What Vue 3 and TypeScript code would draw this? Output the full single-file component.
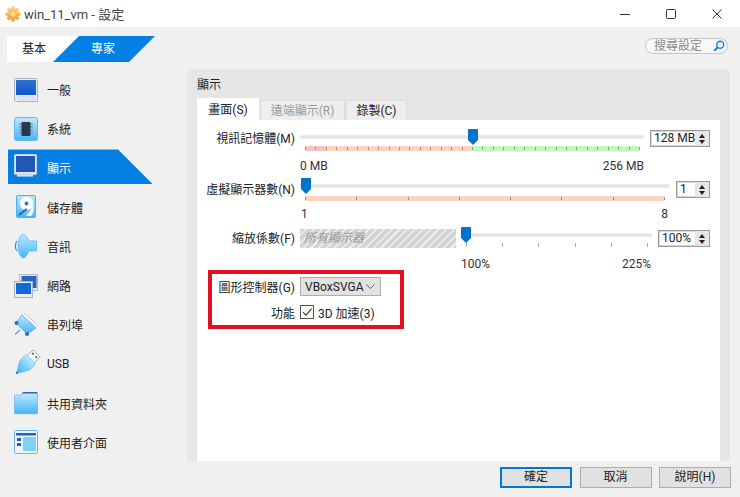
<script setup lang="ts">
interface NavItem { key: string; label: string }
const navItems: NavItem[] = [
  { key: 'general', label: '一般' },
  { key: 'system', label: '系統' },
  { key: 'display', label: '顯示' },
  { key: 'storage', label: '儲存體' },
  { key: 'audio', label: '音訊' },
  { key: 'network', label: '網路' },
  { key: 'serial', label: '串列埠' },
  { key: 'usb', label: 'USB' },
  { key: 'folder', label: '共用資料夾' },
  { key: 'ui', label: '使用者介面' },
]
const ticks = (n: number): string[] =>
  Array.from({ length: n + 1 }, (_, i) => `${(i / n) * 100}%`)
const memTicks = ticks(32)
const monTicks = ticks(7)
const scaleTicks = ticks(5)
</script>

<template>
  <div class="window">
    <svg class="defs" width="0" height="0" aria-hidden="true">
      <defs>
        <linearGradient id="lb" x1="0" y1="0" x2="0" y2="1">
          <stop offset="0" stop-color="#bfe9ff" />
          <stop offset="1" stop-color="#45b5f6" />
        </linearGradient>
        <linearGradient id="db" x1="0" y1="0" x2="0" y2="1">
          <stop offset="0" stop-color="#2f6fd0" />
          <stop offset="1" stop-color="#0f59c8" />
        </linearGradient>
        <linearGradient id="gear" x1="0" y1="0" x2="0" y2="1">
          <stop offset="0" stop-color="#ffcf7a" />
          <stop offset="1" stop-color="#f2a238" />
        </linearGradient>
      </defs>
    </svg>

    <header class="titlebar">
      <svg class="app-icon" viewBox="0 0 16 16">
        <g fill="url(#gear)">
          <circle cx="8" cy="8" r="6" />
          <rect x="6.4" y="0.3" width="3.2" height="15.4" rx="1.2" />
          <rect x="0.3" y="6.4" width="15.4" height="3.2" rx="1.2" />
          <rect x="6.4" y="0.3" width="3.2" height="15.4" rx="1.2" transform="rotate(45 8 8)" />
          <rect x="6.4" y="0.3" width="3.2" height="15.4" rx="1.2" transform="rotate(-45 8 8)" />
        </g>
        <circle cx="8" cy="8" r="3" fill="#ffdc90" stroke="#eda53c" stroke-width=".6" />
      </svg>
      <span class="title">win_11_vm - 設定</span>
      <div class="win-controls">
        <svg width="10" height="10" viewBox="0 0 10 10"><path d="M0 5.5h10" stroke="#333" fill="none" /></svg>
        <svg width="10" height="10" viewBox="0 0 10 10"><rect x=".5" y=".5" width="9" height="9" rx="1" stroke="#333" fill="none" /></svg>
        <svg width="10" height="10" viewBox="0 0 10 10"><path d="M.5.5l9 9M9.5.5l-9 9" stroke="#333" fill="none" /></svg>
      </div>
    </header>

    <div class="main">
      <aside class="sidebar">
        <div class="mode-tabs">
          <svg class="mode-bg" width="148" height="26" viewBox="0 0 148 26">
            <polygon points="0,0 72,0 46,26 0,26" fill="#fff" />
            <polygon points="72,0 148,0 122,26 46,26" fill="#0480e4" />
          </svg>
          <span class="mode basic">基本</span>
          <span class="mode expert">專家</span>
        </div>
        <nav class="nav">
          <div v-for="item in navItems" :key="item.key" class="nav-item" :class="{ active: item.key === 'display' }">
            <svg class="nav-icon" viewBox="0 0 24 24">
              <template v-if="item.key === 'general'">
                <rect x=".5" y=".5" width="23" height="23" rx="1" fill="#e9edf2" stroke="#a9b4c0" />
                <rect x="2" y="2" width="20" height="15" fill="url(#db)" />
                <path d="M4 21v-2h16v2z" fill="#fff" stroke="#aab3bd" stroke-width=".6" />
              </template>
              <template v-else-if="item.key === 'system'">
                <rect x=".5" y=".5" width="23" height="23" rx="2" fill="url(#lb)" stroke="#63b8ea" />
                <path d="M5 7h3M5 10h3M5 13h3M5 16h3M16 7h3M16 10h3M16 13h3M16 16h3" stroke="#7d97ad" stroke-width="1.4" />
                <rect x="7.5" y="5" width="9" height="14" rx="1" fill="#27384c" />
              </template>
              <template v-else-if="item.key === 'display'">
                <rect x=".5" y=".5" width="22" height="20" rx="1" fill="#dfe8f2" stroke="#c3d3e4" />
                <rect x="2" y="2" width="19" height="16" fill="#2257ba" />
                <path d="M3 21h16v1.6H3z" fill="#d5e3f2" />
              </template>
              <template v-else-if="item.key === 'storage'">
                <rect x="2.500" y=".5" width="19" height="22" rx="1.500" fill="url(#lb)" stroke="#4ab0ec" />
                <circle cx="12.500" cy="8.500" r="6.800" fill="#fff" />
                <path d="M12 21h5c2-2 3-5 2.400-11.500C18 14 15 17.500 12 21z" fill="#fff" />
                <circle cx="12.500" cy="8.500" r="2" fill="#2a7ad2" />
                <path d="M5.500 19.500l6.500-5" stroke="#1f6cc8" stroke-width="2.200" stroke-linecap="round" />
              </template>
              <template v-else-if="item.key === 'audio'">
                <path d="M3 7C.8 9.500.8 14.500 3 17" fill="none" stroke="#2f7fd6" stroke-width="1.100" />
                <path d="M9 0C6 1 4 6 4 12s2 11 5 12c1.500-.2 2.500-1 3.500-2.500L15 17h7.500V7H15l-2.500-4.500C11.500 1 10.500.2 9 0z" fill="url(#lb)" stroke="#55b7ef" stroke-width=".7" />
              </template>
              <template v-else-if="item.key === 'network'">
                <rect x="5.500" y=".5" width="18" height="16" fill="#e4e9ef" stroke="#b2bcc8" />
                <rect x="7.500" y="2" width="15" height="12" fill="#2a62c4" />
                <rect x=".5" y="7.500" width="18" height="16" fill="#e9edf2" stroke="#a9b4c0" />
                <rect x="2" y="9" width="15" height="11" fill="#1766d6" />
              </template>
              <template v-else-if="item.key === 'serial'">
                <path d="M9 1l14 12.500" stroke="#9aa5b1" stroke-width="3.600" fill="none" />
                <path d="M9 1l14 12.500" stroke="#fff" stroke-width="2.400" fill="none" />
                <path d="M2 10L8 2l14 13-9 6z" fill="url(#lb)" stroke="#3fa7e5" stroke-width=".7" />
                <path d="M6 17l-5 4.500" stroke="#3fa7e5" stroke-width="1.200" />
                <circle cx="2.500" cy="10" r="2" fill="#1f6fd0" />
                <circle cx="13" cy="21" r="2" fill="#1f6fd0" />
              </template>
              <template v-else-if="item.key === 'usb'">
                <g transform="rotate(45 12 12)">
                  <rect x="7" y="-3" width="10" height="9" fill="#f7f9fb" stroke="#8e9aa7" stroke-width=".7" />
                  <rect x="8.800" y="-1" width="1.800" height="1.800" fill="#3a4a5a" />
                  <rect x="13.400" y="-1" width="1.800" height="1.800" fill="#3a4a5a" />
                  <path d="M5.500 5h13l.5 7c0 4-4 7-5.500 11h-3C9 19 5 16 5 12z" fill="url(#lb)" stroke="#4ab0ec" stroke-width=".5" />
                  <circle cx="12" cy="24.500" r="1.400" fill="#2f7fd6" />
                </g>
              </template>
              <template v-else-if="item.key === 'folder'">
                <path d="M9 1h13.500a1 1 0 011 1v3H7z" fill="#2a62c4" />
                <path d="M1.500 4H7l2-1.500h14.500V22a.8.8 0 01-.8.8H1.300A.8.8 0 01.5 22V5z" fill="url(#lb)" stroke="#4ab0ec" stroke-width=".6" />
              </template>
              <template v-else>
                <rect x=".5" y=".5" width="23" height="23" rx="1" fill="#eaf5fd" stroke="#6fb6e8" />
                <rect x="2" y="3" width="20" height="2.500" fill="#2560c0" />
                <rect x="9" y="7" width="13" height="14" fill="#7fd0fb" />
                <rect x="3" y="8" width="4" height="3" fill="#2560c0" />
                <rect x="3" y="13" width="4" height="3" fill="#2560c0" />
              </template>
            </svg>
            <span class="nav-label">{{ item.label }}</span>
          </div>
        </nav>
      </aside>

      <section class="content">
        <div class="search-row">
          <div class="search">
            <span>搜尋設定</span>
            <svg width="12" height="12" viewBox="0 0 12 12">
              <circle cx="7.200" cy="4.800" r="3.500" fill="#eaf6ff" stroke="#1f7fd8" stroke-width="1.400" />
              <path d="M4.500 7.500L1.800 10.200" stroke="#1f7fd8" stroke-width="2" stroke-linecap="round" />
            </svg>
          </div>
        </div>

        <div class="panel">
          <h2 class="panel-title">顯示</h2>
          <div class="tabs">
            <span class="tab selected">畫面(S)</span>
            <span class="tab disabled">遠端顯示(R)</span>
            <span class="tab">錄製(C)</span>
          </div>
          <div class="page">
            <div class="row row-mem">
              <label class="label">視訊記憶體(M)</label>
              <div class="slider">
                <div class="track">
                  <svg class="handle handle-mem" width="10" height="16" viewBox="0 0 10 16"><path d="M1 0h8a1 1 0 011 1v10l-5 5-5-5V1a1 1 0 011-1z" /></svg>
                </div>
                <div class="band band-mem">
                  <i v-for="t in memTicks" :key="t" class="tick" :style="{ left: t }" />
                </div>
                <div class="scale-labels labels-mem"><span>0 MB</span><span>256 MB</span></div>
              </div>
              <div class="spin spin-mem">
                <span class="spin-value">128 MB</span>
                <span class="spin-btns"><b class="up" /><b class="down" /></span>
              </div>
            </div>

            <div class="row row-mon">
              <label class="label">虛擬顯示器數(N)</label>
              <div class="slider">
                <div class="track">
                  <svg class="handle handle-mon" width="10" height="16" viewBox="0 0 10 16"><path d="M1 0h8a1 1 0 011 1v10l-5 5-5-5V1a1 1 0 011-1z" /></svg>
                </div>
                <div class="band band-mon">
                  <i v-for="t in monTicks" :key="t" class="tick" :style="{ left: t }" />
                </div>
                <div class="scale-labels labels-mon"><span>1</span><span>8</span></div>
              </div>
              <div class="spin spin-mon">
                <span class="spin-value">1</span>
                <span class="spin-btns"><b class="up" /><b class="down" /></span>
              </div>
            </div>

            <div class="row row-scale">
              <label class="label">縮放係數(F)</label>
              <div class="hatched"><em>所有顯示器</em></div>
              <div class="slider slider-scale">
                <div class="track">
                  <svg class="handle handle-scale" width="10" height="16" viewBox="0 0 10 16"><path d="M1 0h8a1 1 0 011 1v10l-5 5-5-5V1a1 1 0 011-1z" /></svg>
                </div>
                <div class="band band-scale">
                  <i v-for="t in scaleTicks" :key="t" class="tick" :style="{ left: t }" />
                </div>
                <div class="scale-labels labels-scale"><span>100%</span><span>225%</span></div>
              </div>
              <div class="spin spin-scale">
                <span class="spin-value">100%</span>
                <span class="spin-btns"><b class="up" /><b class="down" /></span>
              </div>
            </div>

            <div class="highlight">
              <div class="hl-row">
                <label class="hl-label">圖形控制器(G)</label>
                <div class="combo">
                  <span>VBoxSVGA</span>
                  <svg width="9" height="5" viewBox="0 0 9 5"><path d="M.5.5L4.500 4.500 8.500.5" fill="none" stroke="#666" /></svg>
                </div>
              </div>
              <div class="hl-row hl-row-check">
                <label class="hl-label">功能</label>
                <span class="checkbox">
                  <svg width="12" height="12" viewBox="0 0 12 12"><path d="M2 6.200l3 3 5.500-6.500" fill="none" stroke="#333" stroke-width="1.100" /></svg>
                </span>
                <span class="check-text">3D 加速(3)</span>
              </div>
            </div>
          </div>
        </div>
      </section>
    </div>

    <footer class="footer">
      <button class="btn primary">確定</button>
      <button class="btn">取消</button>
      <button class="btn">說明(H)</button>
    </footer>
  </div>
</template>

<style>
html, body { margin: 0; padding: 0; background: #f0f0f0; }
</style>

<style scoped>
.window {
  width: 740px;
  height: 497px;
  display: flex;
  flex-direction: column;
  background: #f0f0f0;
  color: #222;
  font-family: Roboto, "Noto Sans CJK TC", sans-serif;
  font-size: 12px;
  overflow: hidden;
}
.defs { position: absolute; }
.titlebar {
  height: 27px;
  background: #fff;
  display: flex;
  align-items: center;
  padding-left: 5px;
  flex: none;
}
.app-icon { width: 16px; height: 16px; }
.title { margin-left: 3px; font-size: 13px; color: #444; }
.win-controls {
  margin-left: auto;
  display: flex;
  gap: 36px;
  padding-right: 18px;
}
.main { flex: 1; display: flex; min-height: 0; }
.sidebar { width: 187px; flex: none; padding-top: 9px; box-sizing: border-box; }
.mode-tabs {
  position: relative;
  margin-left: 7px;
  width: 148px;
  height: 26px;
  display: flex;
  align-items: center;
}
.mode-bg { position: absolute; left: 0; top: 0; }
.mode { position: relative; line-height: 16px; }
.basic { margin-left: 15px; }
.expert { margin-left: 45px; color: #fff; }
.nav { margin-top: 8px; display: flex; flex-direction: column; }
.nav-item {
  position: relative;
  height: 39.2px;
  display: flex;
  align-items: center;
  padding-left: 14px;
  box-sizing: border-box;
}
.nav-item.active::before {
  content: "";
  position: absolute;
  left: 8px;
  top: 1px;
  width: 145px;
  height: 35px;
  background: #0480e4;
  clip-path: polygon(0 0, 110px 0, 145px 100%, 0 100%);
}
.nav-icon { position: relative; width: 24px; height: 24px; flex: none; overflow: visible; }
.nav-label { position: relative; margin-left: 9px; font-size: 12px; }
.nav-item.active .nav-label { color: #fff; }
.nav-item.active .nav-icon { margin-top: -3px; }

.content { flex: 1; display: flex; flex-direction: column; min-width: 0; padding-right: 10px; }
.search-row {
  height: 42px;
  flex: none;
  display: flex;
  justify-content: flex-end;
  padding-top: 11px;
  box-sizing: border-box;
  padding-right: 2px;
}
.search {
  width: 83px;
  height: 16px;
  box-sizing: border-box;
  border: 1px solid #c4c4c4;
  border-radius: 8px;
  background: #f8f8f8;
  display: flex;
  align-items: center;
  justify-content: space-between;
  padding: 0 2px 0 8px;
  color: #8a8a8a;
  line-height: 14px;
}
.panel {
  flex: 1;
  background: #e6e6e6;
  border-radius: 4px 4px 0 0;
  padding: 0 10px;
  display: flex;
  flex-direction: column;
  min-height: 0;
}
.panel-title {
  margin: 0;
  height: 29px;
  line-height: 32px;
  font-size: 12px;
  font-weight: 400;
  flex: none;
}
.tabs { display: flex; height: 22px; flex: none; align-items: flex-end; gap: 1px; }
.tab {
  height: 20px;
  line-height: 20px;
  background: #eeeeee;
  box-sizing: border-box;
  border: 1px solid #dcdcdc;
  border-bottom: 0;
  text-align: center;
  width: 61px;
}
.tab.selected { height: 22px; line-height: 22px; background: #fff; border-color: #fff; width: 62px; }
.tab.disabled { color: #9a9a9a; width: 85px; }
.page { flex: 1; background: #fff; padding: 9px 10px 0 0; min-height: 0; box-sizing: border-box; }

.row { display: flex; align-items: flex-start; }
.row-mem { height: 49px; }
.row-mon { height: 49px; }
.row-scale { height: 43px; }
.label { width: 98px; flex: none; text-align: right; line-height: 16px; margin-top: 4px; margin-right: 5px; white-space: nowrap; }
.row-mem .label { margin-top: 2px; }
.slider { flex: 1; min-width: 0; }
.track { position: relative; height: 16px; }
.track::before {
  content: "";
  position: absolute;
  left: 0;
  right: 0;
  top: 6px;
  height: 4px;
  background: #e3e3e3;
  border: 1px solid #ececec;
  box-sizing: border-box;
}
.handle { position: absolute; top: 0; fill: #0272cf; }
.handle-mem { left: 168px; }
.handle-mon { left: 1px; }
.handle-scale { left: 0; }
.band { position: relative; height: 5px; margin: 1px 5px 0; }
.band-mem {
  background: linear-gradient(to right, #f7c3c3 0 22px, #fbd3bf 22px 167px, #c2f8bb 167px);
}
.band-mon { background: #fbd3bf; margin-top: 2px; }
.band-scale { background: none; margin-top: 0; height: 4px; }
.tick {
  position: absolute;
  top: 1px;
  width: 1px;
  height: 3px;
  background: #a08f85;
}
.band-scale .tick { top: 0; height: 4px; background: #aaa; }
.band-mem .tick { background: #9a9a8a; }
.scale-labels { display: flex; justify-content: space-between; line-height: 16px; color: #333; }
.labels-mem { margin-top: 7px; }
.labels-mon { margin-top: 5px; padding: 0 1px; }
.labels-scale { margin-top: 9px; padding-right: 1px; }
.spin {
  margin-left: 6px;
  height: 17px;
  box-sizing: border-box;
  border: 1px solid #9a9a9a;
  outline: 1px solid #d8d8d8;
  outline-offset: -2px;
  background: #fff;
  display: flex;
  align-items: center;
  justify-content: space-between;
  flex: none;
  margin-top: 3px;
}
.spin-mem { width: 60px; margin-top: 1px; }
.spin-mon { width: 34px; margin-left: 7px; }
.spin-scale { width: 52px; }
.spin-value { padding-left: 3px; line-height: 15px; position: relative; white-space: nowrap; }
.spin-btns {
  width: 14px;
  height: 15px;
  background: #e6e6e6;
  display: flex;
  flex-direction: column;
  align-items: center;
  justify-content: center;
  gap: 2px;
  position: relative;
}
.up, .down { width: 0; height: 0; border-left: 3px solid transparent; border-right: 3px solid transparent; }
.up { border-bottom: 4px solid #222; }
.down { border-top: 4px solid #222; }
.hatched {
  width: 156px;
  height: 19px;
  margin-top: 2px;
  margin-right: 5px;
  flex: none;
  background: repeating-linear-gradient(135deg, #d4d4d4 0 4px, #efefef 4px 5.500px);
  line-height: 19px;
  padding-left: 4px;
  box-sizing: border-box;
  color: #9a9a9a;
  font-size: 12px;
}
.hatched em { font-style: italic; }

.highlight {
  margin-left: 11px;
  width: 196px;
  height: 59px;
  box-sizing: border-box;
  border: 4px solid #e5101f;
  padding-top: 3px;
}
.hl-row { display: flex; align-items: center; height: 19px; }
.hl-row-check { margin-top: 8px; height: 16px; }
.hl-label { width: 83px; margin-right: 5px; text-align: right; flex: none; white-space: nowrap; }
.combo {
  width: 81px;
  height: 19px;
  box-sizing: border-box;
  border: 1px solid #adadad;
  background: #e2e2e2;
  display: flex;
  align-items: center;
  justify-content: space-between;
  padding: 0 5px 0 4px;
  color: #222;
}
.checkbox {
  width: 14px;
  height: 14px;
  box-sizing: border-box;
  border: 1px solid #555;
  background: #fff;
  display: flex;
  align-items: center;
  justify-content: center;
}
.check-text { margin-left: 4px; }

.footer {
  height: 36px;
  flex: none;
  box-sizing: border-box;
  padding: 6px 9px 0 0;
  display: flex;
  justify-content: flex-end;
  gap: 7.500px;
  align-items: flex-start;
}
.btn {
  width: 72px;
  height: 21px;
  box-sizing: border-box;
  border: 1px solid #adadad;
  background: #e1e1e1;
  font: inherit;
  color: #222;
  padding: 0;
  line-height: 17px;
}
.btn.primary { border: 2px solid #0078d7; }
</style>
